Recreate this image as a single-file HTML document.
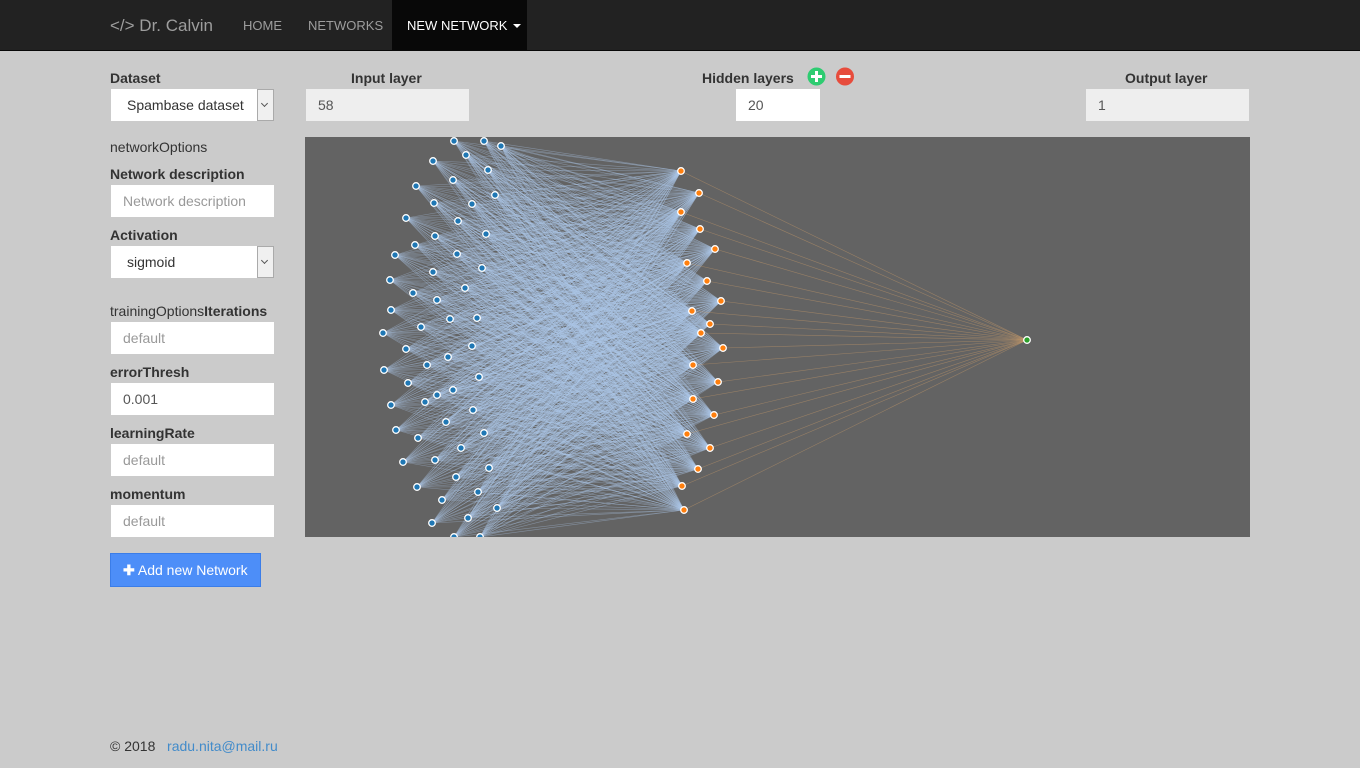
<!DOCTYPE html>
<html><head><meta charset="utf-8"><style>
*{box-sizing:border-box}
body{margin:0;width:1360px;height:768px;background:#cbcbcb;font-family:"Liberation Sans",sans-serif;font-size:14px;color:#333;position:relative;overflow:hidden}
.nav{position:absolute;left:0;top:0;width:1360px;height:51px;background:#222;border-bottom:1px solid #080808}
.nav span{position:absolute;top:18px;color:#9d9d9d;font-size:13px}
.brand{position:absolute;left:110px;top:16px;color:#9d9d9d;font-size:17px}
.act{position:absolute;left:392px;top:0;width:135px;height:50px;background:#080808}
.lbl{position:absolute;font-weight:bold;font-size:14px}
.in{position:absolute;background:#fff;height:32px;padding:8px 12px;font-size:14px;color:#555}
.ph{color:#999}
.ro{background:#eee}
.sel{position:absolute;left:257px;width:17px;height:32px;border:1px solid #aaa;background:#f0f0f0}
.sel:after{content:"";position:absolute;left:4px;top:11px;width:4px;height:4px;border-right:1px solid #555;border-bottom:1px solid #555;transform:rotate(45deg)}
</style></head><body>
<div class="nav">
<div class="brand">&lt;/&gt; Dr. Calvin</div>
<span style="left:243px">HOME</span><span style="left:308px">NETWORKS</span>
<div class="act"></div><span style="left:407px;color:#fff">NEW NETWORK <span style="position:relative;top:-2px;left:2px;display:inline-block;border-left:4px solid transparent;border-right:4px solid transparent;border-top:4px solid #fff"></span></span>
</div>
<div class="lbl" style="left:110px;top:70px">Dataset</div>
<div class="in" style="left:111px;top:89px;width:146px;color:#333;padding-left:16px">Spambase dataset</div><div class="sel" style="top:89px"></div>
<div style="position:absolute;left:110px;top:139px">networkOptions</div>
<div class="lbl" style="left:110px;top:166px">Network description</div>
<div class="in ph" style="left:111px;top:185px;width:163px">Network description</div>
<div class="lbl" style="left:110px;top:227px">Activation</div>
<div class="in" style="left:111px;top:246px;width:146px;color:#333;padding-left:16px">sigmoid</div><div class="sel" style="top:246px"></div>
<div style="position:absolute;left:110px;top:303px">trainingOptions<b>Iterations</b></div>
<div class="in ph" style="left:111px;top:322px;width:163px">default</div>
<div class="lbl" style="left:110px;top:364px">errorThresh</div>
<div class="in" style="left:111px;top:383px;width:163px">0.001</div>
<div class="lbl" style="left:110px;top:425px">learningRate</div>
<div class="in ph" style="left:111px;top:444px;width:163px">default</div>
<div class="lbl" style="left:110px;top:486px">momentum</div>
<div class="in ph" style="left:111px;top:505px;width:163px">default</div>
<div style="position:absolute;left:110px;top:553px;width:151px;height:34px;background:#4d8ef8;border:1px solid #3b7de8;color:#fff;padding:8px 12px;font-size:14px"><b>&#10010;</b> Add new Network</div>
<div class="lbl" style="left:351px;top:70px">Input layer</div>
<div class="in ro" style="left:306px;top:89px;width:163px">58</div>
<div class="lbl" style="left:702px;top:70px">Hidden layers</div>
<svg style="position:absolute;left:807px;top:67px" width="50" height="20"><circle cx="9.5" cy="9.5" r="9" fill="#2ecc71"/><rect x="4" y="8" width="11" height="3" fill="#fff"/><rect x="8" y="4" width="3" height="11" fill="#fff"/><circle cx="38" cy="9.5" r="9" fill="#e74c3c"/><rect x="32.5" y="8" width="11" height="3" fill="#fff"/></svg>
<div class="in" style="left:736px;top:89px;width:84px">20</div>
<div class="lbl" style="left:1125px;top:70px">Output layer</div>
<div class="in ro" style="left:1086px;top:89px;width:163px">1</div>
<svg id="g" style="position:absolute;left:305px;top:137px" width="945" height="400"><rect width="945" height="400" fill="#636363"/></svg>
<div style="position:absolute;left:110px;top:738px">© 2018 &nbsp; <span style="color:#428bca">radu.nita@mail.ru</span></div>
<script>
var I=[[454,141],[484,141],[501,146],[466,155],[433,161],[488,170],[453,180],[416,186],[434,203],[472,204],[495,195],[406,218],[458,221],[486,234],[435,236],[415,245],[395,255],[457,254],[482,268],[433,272],[390,280],[465,288],[413,293],[437,300],[391,310],[450,319],[477,318],[421,327],[383,333],[472,346],[406,349],[448,357],[427,365],[384,370],[479,377],[408,383],[453,390],[437,395],[425,402],[391,405],[473,410],[446,422],[396,430],[484,433],[418,438],[461,448],[435,460],[403,462],[489,468],[456,477],[417,487],[478,492],[442,500],[497,508],[468,518],[432,523],[454,537],[480,537]];
var H=[[681,171],[699,193],[681,212],[700,229],[715,249],[687,263],[707,281],[721,301],[692,311],[710,324],[701,333],[723,348],[693,365],[718,382],[693,399],[714,415],[687,434],[710,448],[698,469],[682,486],[684,510]];
var O=[1027,340],ox=305,oy=137,s='';
I.forEach(function(a){H.forEach(function(b){s+='<line x1="'+(a[0]-ox)+'" y1="'+(a[1]-oy)+'" x2="'+(b[0]-ox)+'" y2="'+(b[1]-oy)+'" stroke="#aec7e8" stroke-opacity="0.45" stroke-width="0.6"/>'})});
H.forEach(function(b){s+='<line x1="'+(b[0]-ox)+'" y1="'+(b[1]-oy)+'" x2="'+(O[0]-ox)+'" y2="'+(O[1]-oy)+'" stroke="#d9a46a" stroke-opacity="0.45" stroke-width="0.6"/>'});
I.forEach(function(a){s+='<circle cx="'+(a[0]-ox)+'" cy="'+(a[1]-oy)+'" r="3.3" fill="#1f77b4" stroke="#fff" stroke-width="1.3"/>'});
H.forEach(function(a){s+='<circle cx="'+(a[0]-ox)+'" cy="'+(a[1]-oy)+'" r="3.3" fill="#ff7f0e" stroke="#fff" stroke-width="1.3"/>'});
s+='<circle cx="'+(O[0]-ox)+'" cy="'+(O[1]-oy)+'" r="3.3" fill="#2ca02c" stroke="#fff" stroke-width="1.3"/>';
document.getElementById('g').innerHTML+=s;
</script>
</body></html>
